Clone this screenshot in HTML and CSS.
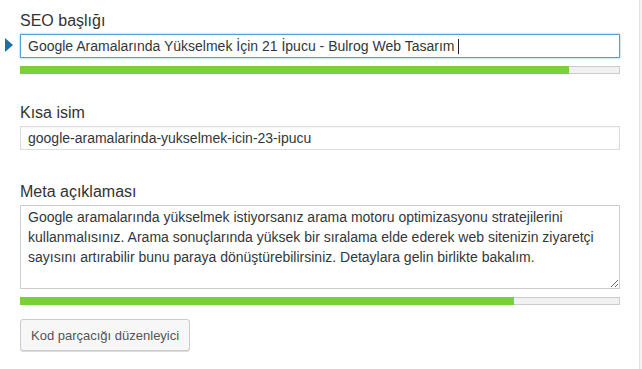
FILE: index.html
```html
<!DOCTYPE html>
<html lang="tr">

<head>
    <meta charset="UTF-8">
    <title>SEO</title>
    <link rel="stylesheet" href="styles.css">
</head>

<body>
    <div id="wrap">
        <div id="box">
            <div class="group">
                <p class="label">SEO başlığı</p>
                <div class="row">
                    <span class="marker"></span>
                    <div class="field focus">Google Aramalarında Yükselmek İçin 21 İpucu - Bulrog Web Tasarım <span class="caret"></span></div>
                </div>
                <div class="bar"><div class="fill" style="width: 91.5%"></div></div>
            </div>

            <div class="group g2">
                <p class="label">Kısa isim</p>
                <div class="field">google-aramalarinda-yukselmek-icin-23-ipucu</div>
            </div>

            <div class="group g3">
                <p class="label">Meta açıklaması</p>
                <textarea class="area">Google aramalarında yükselmek istiyorsanız arama motoru optimizasyonu stratejilerini kullanmalısınız. Arama sonuçlarında yüksek bir sıralama elde ederek web sitenizin ziyaretçi sayısını artırabilir bunu paraya dönüştürebilirsiniz. Detaylara gelin birlikte bakalım.</textarea>
                <div class="bar"><div class="fill" style="width: 82.3%"></div></div>
            </div>

            <button id="but">Kod parçacığı düzenleyici</button>
        </div>
        <div id="side"></div>
    </div>
</body>

</html>
```

FILE: styles.css
```css
* {
    margin: 0;
    padding: 0;
    box-sizing: border-box;
}

body {
    font-family: "Liberation Sans", Arial, sans-serif;
    color: #32373c;
    background: #fff;
}

#wrap {
    display: flex;
    height: 369px;
}

#box {
    width: 639px;
    padding: 11px 0 0 20px;
}

#side {
    flex: 1;
    background: #f3f3f3;
    border-left: 1px solid #e2e2e2;
}

.group {
    width: 600px;
}

.g2 {
    margin-top: 29px;
}

.g3 {
    margin-top: 32px;
}

.label {
    font-size: 16px;
    line-height: 20px;
    color: #333;
    margin-bottom: 3px;
}

.row {
    position: relative;
}

.marker {
    position: absolute;
    left: -15px;
    top: 4px;
    width: 0;
    height: 0;
    border-left: 8px solid #1e6fa5;
    border-top: 7px solid transparent;
    border-bottom: 7px solid transparent;
}

.field {
    height: 24px;
    border: 1px solid #ddd;
    padding: 0 7px;
    font-size: 14px;
    line-height: 22px;
    color: #32373c;
    white-space: nowrap;
    box-shadow: inset 0 1px 2px rgba(0,0,0,0.04);
}

.focus {
    border-color: #5b9dd9;
    box-shadow: 0 0 2px rgba(30,140,190,0.6);
}

.caret {
    display: inline-block;
    width: 1px;
    height: 15px;
    background: #222;
    vertical-align: -3px;
}

.bar {
    height: 8px;
    margin-top: 8px;
    background: #f1f1f1;
    box-shadow: inset 0 0 0 1px #ccc;
}

.fill {
    height: 100%;
    background: #7ad03a;
}

.area {
    display: block;
    width: 600px;
    height: 84px;
    border: 1px solid #ccc;
    padding: 1px 7px 2px;
    font-family: "Liberation Sans", Arial, sans-serif;
    font-size: 14px;
    line-height: 20px;
    color: #32373c;
    outline: none;
    resize: both;
}

#but {
    margin-top: 14px;
    height: 32px;
    padding: 0 10px;
    font-family: "Liberation Sans", Arial, sans-serif;
    font-size: 13px;
    color: #555;
    background: #f7f7f7;
    border: 1px solid #ccc;
    border-radius: 3px;
    box-shadow: 0 1px 0 #ddd;
}
```
